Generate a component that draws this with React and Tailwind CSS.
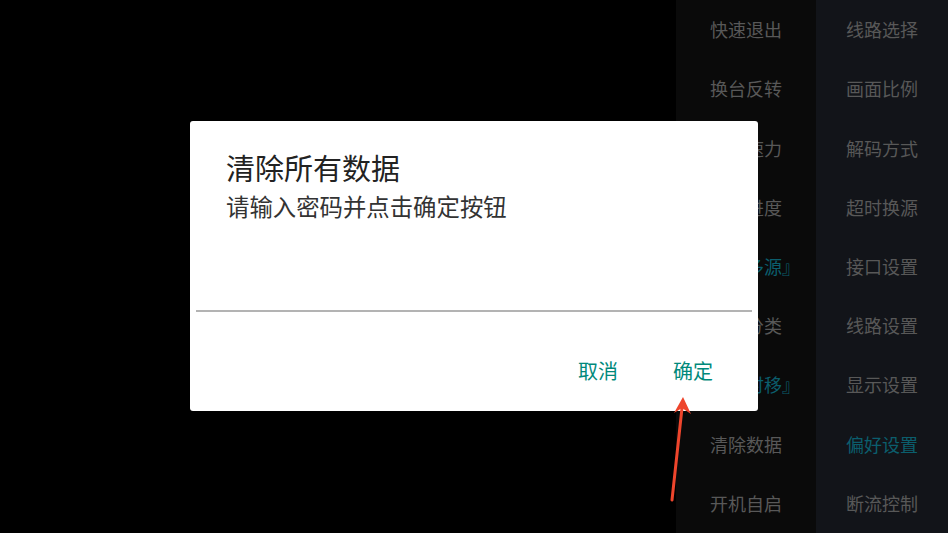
import React from "react";

const LEFT_ITEMS = [
  { label: "快速退出" },
  { label: "换台反转" },
  { label: "缓冲速力" },
  { label: "加载进度" },
  { label: "『直播多源』", active: true },
  { label: "频道分类" },
  { label: "『直播时移』", active: true },
  { label: "清除数据" },
  { label: "开机自启" },
];

const RIGHT_ITEMS = [
  { label: "线路选择" },
  { label: "画面比例" },
  { label: "解码方式" },
  { label: "超时换源" },
  { label: "接口设置" },
  { label: "线路设置" },
  { label: "显示设置" },
  { label: "偏好设置", active: true },
  { label: "断流控制" },
];

const MenuColumn = ({ items, className }) => (
  <div className={"flex flex-col h-full " + className}>
    {items.map((item) => (
      <div
        key={item.label}
        className={
          "flex-1 flex items-center justify-center text-[18px] whitespace-nowrap " +
          (item.active ? "text-[#0b5e6d]" : "text-[#585858]")
        }
      >
        {item.label}
      </div>
    ))}
  </div>
);

const App = () => {
  return (
    <div
      className="relative w-[948px] h-[533px] bg-black overflow-hidden flex justify-end"
      style={{ fontFamily: '"Noto Sans CJK SC", "Noto Sans", sans-serif' }}
    >
      <MenuColumn items={LEFT_ITEMS} className="w-[140px] bg-[#0a0a0a]" />
      <MenuColumn items={RIGHT_ITEMS} className="w-[132px] bg-[#121419]" />

      {/* dialog */}
      <div className="absolute left-[190px] top-[121px] w-[568px] h-[290px] bg-white rounded-[3px] flex flex-col">
        <div className="pl-[36px] pt-[29px]">
          <div className="text-[29px] leading-[34px] text-[#222]">清除所有数据</div>
          <div className="text-[23.4px] leading-[44px] text-[#333]">请输入密码并点击确定按钮</div>
        </div>
        <input
          type="password"
          className="mx-[6px] h-[84px] border-b-2 border-[#b3b3b3] outline-none bg-transparent"
        />
        <div className="flex justify-end gap-[55px] pr-[45px] pt-[47px]">
          <button className="text-[20px] leading-[24px] text-[#00897b]">取消</button>
          <button className="text-[20px] leading-[24px] text-[#00897b]">确定</button>
        </div>
      </div>

      {/* annotation arrow */}
      <svg className="absolute left-0 top-0" width="948" height="533" viewBox="0 0 948 533">
        <line x1="672" y1="500" x2="682" y2="408" stroke="#ee452c" strokeWidth="3" strokeLinecap="round" />
        <polygon points="683,397 691,414 682,408 674,413" fill="#ee452c" />
      </svg>
    </div>
  );
};

export default App;
